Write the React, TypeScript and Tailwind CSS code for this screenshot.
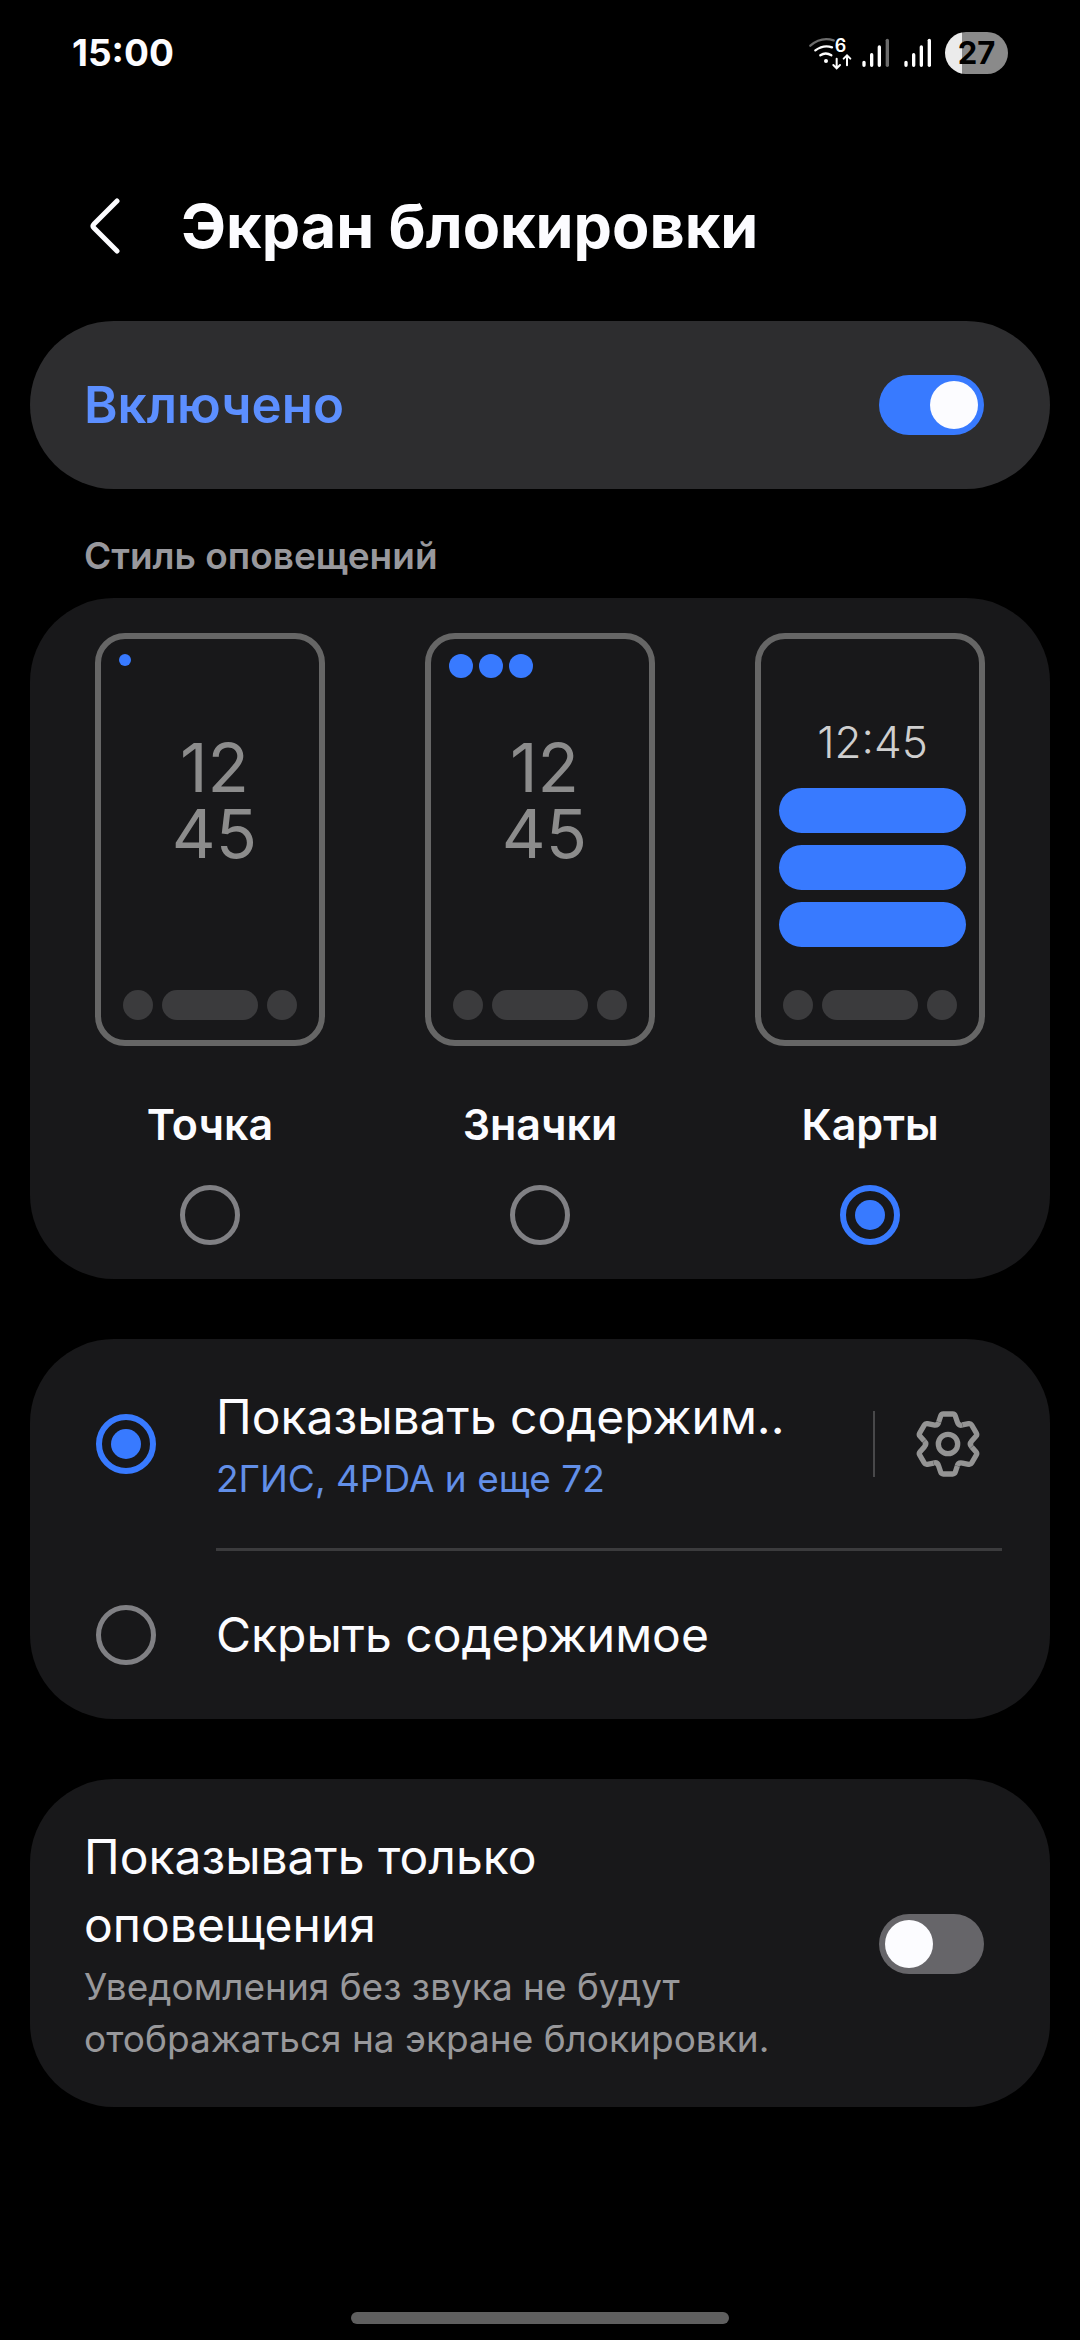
import React, { ReactNode, useState } from "react";

const ClockStack = () => (
  <p className="mt-14 pl-1 text-center text-[68px] leading-[66px] text-[#8c8c8c]">
    12
    <br />
    45
  </p>
);

const DotPreview = () => (
  <>
    <div className="h-6">
      <div className="size-3 rounded-full bg-[#387aff]" />
    </div>
    <ClockStack />
  </>
);

const IconsPreview = () => (
  <>
    <div className="flex h-6 gap-1.5">
      {[0, 1, 2].map((dot) => (
        <div key={dot} className="size-6 rounded-full bg-[#387aff]" />
      ))}
    </div>
    <ClockStack />
  </>
);

const CardsPreview = () => (
  <>
    <p className="mt-[60px] text-center text-[44px] leading-[56px] font-light text-[#cfcfcf]">
      12:45
    </p>
    <div className="mt-[18px] flex flex-col gap-3">
      {[0, 1, 2].map((bar) => (
        <div key={bar} className="h-[45px] rounded-full bg-[#387aff]" />
      ))}
    </div>
  </>
);

const styles: { id: string; title: string; preview: ReactNode }[] = [
  { id: "dot", title: "Точка", preview: <DotPreview /> },
  { id: "icons", title: "Значки", preview: <IconsPreview /> },
  { id: "cards", title: "Карты", preview: <CardsPreview /> },
];

type RadioProps = {
  id: string;
  name: string;
  checked: boolean;
  onChange: () => void;
};

const Radio = ({ id, name, checked, onChange }: RadioProps) => (
  <input
    type="radio"
    id={id}
    name={name}
    checked={checked}
    onChange={onChange}
    className="grid size-[60px] shrink-0 appearance-none place-items-center rounded-full border-[5px] border-[#808084]
      before:size-[30px] before:rounded-full checked:border-6 checked:border-[#387aff] checked:before:bg-[#387aff]"
  />
);

type SwitchProps = {
  id: string;
  checked: boolean;
  onChange: () => void;
};

const Switch = ({ id, checked, onChange }: SwitchProps) => (
  <input
    type="checkbox"
    role="switch"
    id={id}
    checked={checked}
    onChange={onChange}
    className="flex h-[60px] w-[105px] shrink-0 appearance-none items-center rounded-full bg-[#666569] px-1.5
      before:size-12 before:rounded-full before:bg-[#fcfcff] checked:justify-end checked:bg-[#387aff]"
  />
);

const WifiIcon = () => (
  <svg width="43" height="45" viewBox="88 62 129 135" fill="none" strokeLinecap="round">
    <path d="M92 106Q124 78 162 90" stroke="#6b6b6b" strokeWidth="7" />
    <path d="M107 120Q132 102 157 111" stroke="#fff" strokeWidth="7" />
    <path d="M122 135Q138 124 155 135" stroke="#fff" strokeWidth="7" />
    <circle cx="139" cy="152" r="6" fill="#fff" />
    <path d="M171 145V172M161 164L171 174L181 164" stroke="#fff" strokeWidth="6" />
    <path d="M202 165V136M192 145L202 135L212 145" stroke="#fff" strokeWidth="6" />
    <text x="165" y="124" fill="#fff" fontSize="54" fontWeight="600">
      6
    </text>
  </svg>
);

const SignalIcon = ({ full }: { full?: boolean }) => (
  <svg width="28" height="30" viewBox="0 0 84 90" fill="none" stroke="#fff" strokeWidth="10" strokeLinecap="round">
    <path d="M6 73V82M29 50V82M52 27V82" />
    <path d="M76 7V82" stroke={full ? "#fff" : "#6b6b6b"} />
  </svg>
);

const GearIcon = () => (
  <svg width="66" height="66" viewBox="-99 -99 198 198" fill="none" stroke="#949494" strokeWidth="16">
    {[0, 60, 120, 180, 240, 300].map((angle) => (
      <path
        key={angle}
        d="M-28-66L-22-84Q-20-90-14-90H14Q20-90 22-84L28-66Q32-54 43-57"
        transform={`rotate(${angle})`}
      />
    ))}
    <circle r="29" />
  </svg>
);

const StatusBar = () => (
  <div className="flex h-[106px] items-center justify-between px-[72px]">
    <span className="text-[37px] leading-[52px] font-bold">15:00</span>
    <div className="flex items-center">
      <WifiIcon />
      <div className="mr-[13px] ml-2.5 flex items-center gap-3.5">
        <SignalIcon />
        <SignalIcon full />
      </div>
      <span
        className="flex h-[42px] w-[63px] items-center justify-center rounded-full text-[31px] font-bold text-black
          bg-[linear-gradient(to_right,#ebebeb_27%,#8a8a8a_27%)]"
      >
        27
      </span>
    </div>
  </div>
);

const App = () => {
  const [enabled, setEnabled] = useState(true);
  const [style, setStyle] = useState("cards");
  const [content, setContent] = useState("show");
  const [alertsOnly, setAlertsOnly] = useState(false);

  return (
    <div className="flex min-h-screen flex-col bg-black font-['Inter',sans-serif] text-[#fcfcff]">
      <StatusBar />

      <header className="flex h-[215px] items-center gap-[61px] pt-6 pl-[90px]">
        <button type="button" aria-label="Назад">
          <svg width="30" height="56" viewBox="0 0 30 56" fill="none" stroke="#fcfcff" strokeWidth="5">
            <path d="M27 3L4 26Q2 28 4 30L27 53" strokeLinecap="round" />
          </svg>
        </button>
        <h1 className="text-[61px] leading-[80px] font-bold">Экран блокировки</h1>
      </header>

      <main className="px-[30px]">
        <section className="flex h-[168px] items-center justify-between rounded-full bg-[#2d2d2f] pr-[66px] pl-[54px]">
          <label htmlFor="enabled" className="text-[51px] leading-[68px] font-semibold text-[#5c8fff]">
            Включено
          </label>
          <Switch id="enabled" checked={enabled} onChange={() => setEnabled(!enabled)} />
        </section>

        <h2 className="pt-[47px] pb-[22px] pl-[54px] text-[37px] leading-[40px] font-semibold text-[#98989d]">
          Стиль оповещений
        </h2>

        <section className="flex justify-between rounded-[84px] bg-[#18181a] px-[65px] pt-[35px] pb-[34px]">
          {styles.map((item) => (
            <div key={item.id} className="flex flex-col items-center">
              <div className="flex h-[413px] w-[230px] flex-col rounded-[30px] border-6 border-[#666] pt-[15px] pb-5">
                <div className="pr-[13px] pl-[18px]">{item.preview}</div>
                <div className="mt-auto flex justify-center gap-[9px]">
                  <div className="size-[30px] rounded-full bg-[#3b3b3d]" />
                  <div className="h-[30px] w-24 rounded-full bg-[#3b3b3d]" />
                  <div className="size-[30px] rounded-full bg-[#3b3b3d]" />
                </div>
              </div>
              <label htmlFor={item.id} className="mt-12 mb-[31px] text-[43px] leading-[60px] font-semibold">
                {item.title}
              </label>
              <Radio
                id={item.id}
                name="style"
                checked={style === item.id}
                onChange={() => setStyle(item.id)}
              />
            </div>
          ))}
        </section>

        <section className="mt-[60px] rounded-[84px] bg-[#18181a] pl-[66px]">
          <div className="flex h-[209px] items-center pr-[69px]">
            <Radio id="show" name="content" checked={content === "show"} onChange={() => setContent("show")} />
            <label htmlFor="show" className="ml-[60px] flex grow flex-col gap-0.5">
              <span className="text-[48px] leading-[68px]">Показывать содержим..</span>
              <span className="text-[37px] leading-[52px] text-[#628fe8]">2ГИС, 4PDA и еще 72</span>
            </label>
            <div className="mr-10 h-[66px] w-0.5 bg-[#48484a]" />
            <button type="button" aria-label="Настройки">
              <GearIcon />
            </button>
          </div>
          <div className="mr-12 ml-[120px] h-[3px] bg-[#3b3b3d]" />
          <div className="flex h-[168px] items-center">
            <Radio id="hide" name="content" checked={content === "hide"} onChange={() => setContent("hide")} />
            <label htmlFor="hide" className="ml-[60px] text-[48px] leading-[68px]">
              Скрыть содержимое
            </label>
          </div>
        </section>

        <section className="mt-[60px] flex items-center justify-between rounded-[84px] bg-[#18181a] pt-11 pr-[66px] pb-[42px] pl-[54px]">
          <label htmlFor="alerts" className="flex flex-col gap-0.5">
            <span className="text-[48px] leading-[68px]">
              Показывать только
              <br />
              оповещения
            </span>
            <span className="text-[37px] leading-[52px] text-[#98989b]">
              Уведомления без звука не будут
              <br />
              отображаться на экране блокировки.
            </span>
          </label>
          <Switch id="alerts" checked={alertsOnly} onChange={() => setAlertsOnly(!alertsOnly)} />
        </section>
      </main>

      <div className="mx-auto mt-auto mb-4 h-3 w-[35%] rounded-full bg-[#5f5f5f]" />
    </div>
  );
};

export default App;
